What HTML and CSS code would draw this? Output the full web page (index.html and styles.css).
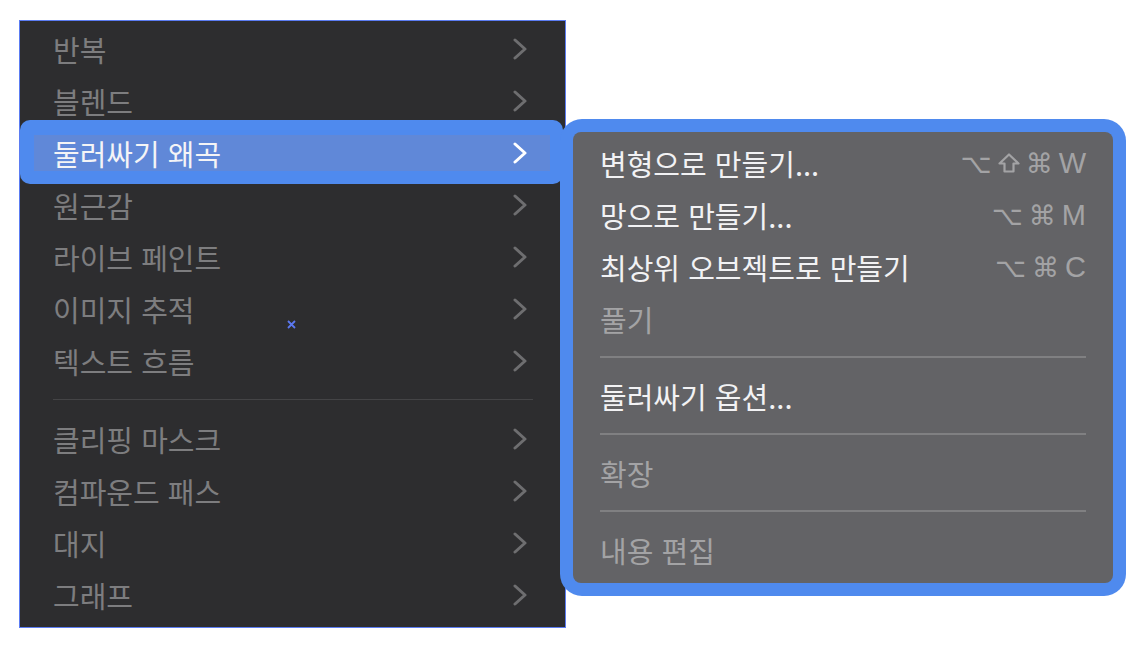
FILE: index.html
```html
<!DOCTYPE html>
<html lang="ko">
<head>
    <meta charset="UTF-8">
    <title>개체 메뉴</title>
    <link rel="stylesheet" href="styles.css">
</head>
<body>
    <div class="menu">
        <div class="item">반복<svg class="chev" viewBox="0 0 14 22"><polyline points="2,2 12,11 2,20"/></svg></div>
        <div class="item">블렌드<svg class="chev" viewBox="0 0 14 22"><polyline points="2,2 12,11 2,20"/></svg></div>
        <div class="item active">둘러싸기 왜곡<svg class="chev" viewBox="0 0 14 22"><polyline points="2,2 12,11 2,20"/></svg></div>
        <div class="item">원근감<svg class="chev" viewBox="0 0 14 22"><polyline points="2,2 12,11 2,20"/></svg></div>
        <div class="item">라이브 페인트<svg class="chev" viewBox="0 0 14 22"><polyline points="2,2 12,11 2,20"/></svg></div>
        <div class="item">이미지 추적<svg class="chev" viewBox="0 0 14 22"><polyline points="2,2 12,11 2,20"/></svg></div>
        <div class="item">텍스트 흐름<svg class="chev" viewBox="0 0 14 22"><polyline points="2,2 12,11 2,20"/></svg></div>
        <div class="sep"></div>
        <div class="item">클리핑 마스크<svg class="chev" viewBox="0 0 14 22"><polyline points="2,2 12,11 2,20"/></svg></div>
        <div class="item">컴파운드 패스<svg class="chev" viewBox="0 0 14 22"><polyline points="2,2 12,11 2,20"/></svg></div>
        <div class="item">대지<svg class="chev" viewBox="0 0 14 22"><polyline points="2,2 12,11 2,20"/></svg></div>
        <div class="item">그래프<svg class="chev" viewBox="0 0 14 22"><polyline points="2,2 12,11 2,20"/></svg></div>

        <svg class="marker" viewBox="0 0 9 9"><path d="M1 1 L8 8 M8 1 L1 8"/></svg>
    </div>

    <div class="submenu">
        <div class="panel">
            <div class="sub-item">변형으로 만들기...<span class="keys"><span class="sym">⌥</span><svg class="shift" viewBox="0 0 22 20"><path d="M11 1.5 L20.5 10.5 H15.5 V18.5 H6.5 V10.5 H1.5 Z"/></svg><span class="sym">⌘</span><span class="key">W</span></span></div>
            <div class="sub-item">망으로 만들기...<span class="keys"><span class="sym">⌥</span><span class="sym">⌘</span><span class="key">M</span></span></div>
            <div class="sub-item">최상위 오브젝트로 만들기<span class="keys"><span class="sym">⌥</span><span class="sym">⌘</span><span class="key">C</span></span></div>
            <div class="sub-item disabled">풀기</div>
            <div class="sub-sep"></div>
            <div class="sub-item">둘러싸기 옵션...</div>
            <div class="sub-sep"></div>
            <div class="sub-item disabled">확장</div>
            <div class="sub-sep"></div>
            <div class="sub-item disabled">내용 편집</div>
        </div>
    </div>
</body>
</html>
```

FILE: styles.css
```css
body {
    margin: 0;
    padding: 20px 0 0 19px;
    background: #ffffff;
    display: flex;
    align-items: flex-start;
    font-family: "Noto Sans CJK KR", "Noto Sans", sans-serif;
}
.menu {
    position: relative;
    width: 545px;
    padding: 2px 0 6px;
    background: #2d2d2f;
    border: 1px solid #5b7cf2;
}
.item {
    position: relative;
    isolation: isolate;
    height: 52px;
    display: flex;
    align-items: center;
    justify-content: space-between;
    padding: 0 38px 0 33px;
    font-size: 29px;
    color: #7d7d7f;
}
.chev {
    width: 14px;
    height: 22px;
    fill: none;
    stroke: #6e6e70;
    stroke-width: 3;
    stroke-linecap: round;
    stroke-linejoin: round;
}
.item.active {
    color: #f4f4f6;
}
.item.active .chev {
    stroke: #ffffff;
}
/* outer blue frame around the hovered row */
.item.active::before {
    content: "";
    position: absolute;
    top: -7px;
    bottom: -5px;
    left: 0;
    right: 2px;
    background: #4f8aee;
    border-radius: 10px;
    z-index: -2;
}
.item.active::after {
    content: "";
    position: absolute;
    top: 8px;
    bottom: 8px;
    left: 14px;
    right: 15px;
    background: #6088d8;
    z-index: -1;
}
.sep {
    height: 1px;
    margin: 12px 32px 13px 33px;
    background: #444446;
}
.marker {
    position: absolute;
    left: 267px;
    top: 299px;
    width: 9px;
    height: 9px;
    stroke: #5b78f0;
    stroke-width: 1.8;
}
.submenu {
    margin: 99px 0 0 -6px;
    width: 540px;
    padding: 13px;
    background: #4f8aee;
    border-radius: 22px;
    position: relative;
}
.panel {
    background: #636366;
    border-radius: 8px;
    padding: 5px 27px 7px;
}
.sub-item {
    height: 52px;
    display: flex;
    align-items: center;
    justify-content: space-between;
    font-size: 29px;
    color: #f2f2f4;
}
.sub-item.disabled {
    color: #a3a3a5;
}
.sub-sep {
    height: 2px;
    margin: 11px 0 12px;
    background: #808082;
}
.keys {
    display: flex;
    align-items: center;
    gap: 6px;
    color: #a3a3a5;
}
.sym {
    font-family: "DejaVu Sans", sans-serif;
    font-size: 27px;
}
.shift {
    width: 22px;
    height: 20px;
    fill: none;
    stroke: #a3a3a5;
    stroke-width: 2.2;
    stroke-linejoin: round;
}
.key {
    font-family: "Liberation Sans", sans-serif;
    font-size: 29px;
}
```
